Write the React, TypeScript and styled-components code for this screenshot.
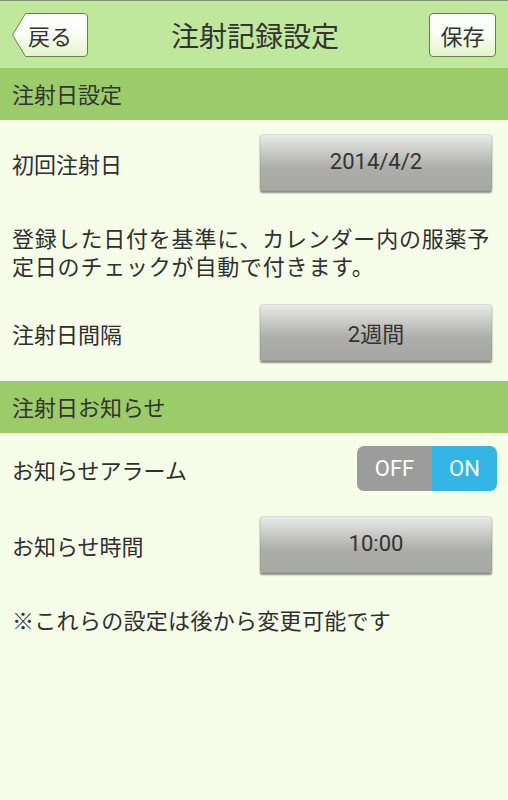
import React from "react";
import styled, { createGlobalStyle } from "styled-components";

const Global = createGlobalStyle`
  html, body { margin: 0; padding: 0; background: #f6fee9; }
  body { font-family: Roboto, "Noto Sans CJK JP", sans-serif; color: #2f2f2f; }
  * { box-sizing: border-box; }
`;

const Page = styled.div`
  width: 508px;
  min-height: 800px;
  background: #f6fee9;
  display: flex;
  flex-direction: column;
`;

const Header = styled.header`
  height: 68px;
  background: #bfe89c;
  border-top: 1px solid #7f8f70;
  display: grid;
  grid-template-columns: 1fr auto 1fr;
  align-items: center;
  padding: 0 12px;
`;

const Title = styled.h1`
  margin: 0;
  font-size: 28px;
  font-weight: 400;
  color: #333;
  font-family: "Noto Sans CJK JP", sans-serif;
  letter-spacing: 0;
  padding-left: 2px;
`;

const BackButton = styled.button`
  position: relative;
  justify-self: start;
  width: 76px;
  height: 44px;
  margin-top: 1px;
  border: none;
  background: none;
  padding: 0 0 0 16px;
  font-family: "Noto Sans CJK JP", sans-serif;
  font-size: 22px;
  color: #333;
  text-align: left;
  cursor: pointer;
  & > span { position: relative; }
`;

const BackShape = styled.svg`
  position: absolute;
  inset: 0;
`;

const SaveButton = styled.button`
  justify-self: end;
  width: 67px;
  height: 44px;
  margin-top: 1px;
  border: 1px solid #6e7d4e;
  border-radius: 4px;
  background: linear-gradient(#ffffff 0%, #fbfef6 45%, #e2f4c9 100%);
  font-family: "Noto Sans CJK JP", sans-serif;
  font-size: 22px;
  color: #333;
  padding: 0;
  cursor: pointer;
`;

const SectionHeader = styled.div<{ $mt?: number }>`
  height: 52px;
  margin-top: ${(p) => p.$mt ?? 0}px;
  background: #9bcc69;
  display: flex;
  align-items: center;
  padding: 0 12px 2px;
  font-family: "Noto Sans CJK JP", sans-serif;
  font-size: 22px;
  color: #333;
`;

const Row = styled.div<{ $mt: number }>`
  display: flex;
  align-items: center;
  justify-content: space-between;
  margin-top: ${(p) => p.$mt}px;
  padding: 0 16px 0 12px;
`;

const Label = styled.span`
  font-family: "Noto Sans CJK JP", sans-serif;
  font-size: 22px;
  color: #2f2f2f;
`;

const ValueButton = styled.button`
  width: 232px;
  height: 57px;
  border: none;
  border-radius: 2px;
  background: linear-gradient(#ebebe9 0%, #c6c7c3 35%, #acada9 60%, #a7a8a4 100%);
  box-shadow: 0 2px 2px rgba(0, 0, 0, 0.45), inset 0 0 0 1px rgba(0, 0, 0, 0.06);
  font-family: Roboto, "Noto Sans CJK JP", sans-serif;
  font-size: 22px;
  color: #333;
  padding: 0 0 2px;
  cursor: pointer;
`;

const Paragraph = styled.div<{ $mt: number; $size: number; $spacing?: number }>`
  margin: ${(p) => p.$mt}px 0 0;
  padding: 0 12px;
  display: flex;
  flex-direction: column;
  font-family: "Noto Sans CJK JP", sans-serif;
  font-size: ${(p) => p.$size}px;
  letter-spacing: ${(p) => p.$spacing ?? 0}px;
  color: #2f2f2f;
  white-space: nowrap;
`;

const Line = styled.span`
  display: block;
  height: 28px;
  line-height: 28px;
`;

const Toggle = styled.div`
  display: flex;
  width: 140px;
  height: 45px;
  border-radius: 7px;
  overflow: hidden;
  margin-right: -5px;
`;

const ToggleHalf = styled.span<{ $active?: boolean }>`
  flex: ${(p) => (p.$active ? "0 0 65px" : "0 0 75px")};
  display: flex;
  align-items: center;
  justify-content: center;
  background: ${(p) => (p.$active ? "#33b5e5" : "#9c9c9c")};
  color: #ffffff;
  font-family: Roboto, sans-serif;
  font-size: 22px;
  padding-bottom: 1px;
`;

export default function App() {
  return (
    <Page>
      <Global />
      <Header>
        <BackButton>
          <BackShape width="76" height="44" viewBox="0 0 76 44">
            <defs>
              <linearGradient id="bk" x1="0" y1="0" x2="0" y2="1">
                <stop offset="0" stopColor="#ffffff" />
                <stop offset="0.45" stopColor="#fbfef6" />
                <stop offset="1" stopColor="#e2f4c9" />
              </linearGradient>
            </defs>
            <path
              d="M13.5 0.5 H72 Q75.5 0.5 75.5 4 V40 Q75.5 43.5 72 43.5 H13.5 L1.2 23.2 Q0.5 22 1.2 20.8 Z"
              fill="url(#bk)"
              stroke="#6e7d4e"
              strokeWidth="1"
            />
          </BackShape>
          <span>戻る</span>
        </BackButton>
        <Title>注射記録設定</Title>
        <SaveButton>保存</SaveButton>
      </Header>

      <SectionHeader>注射日設定</SectionHeader>
      <Row $mt={14}>
        <Label>初回注射日</Label>
        <ValueButton>2014/4/2</ValueButton>
      </Row>
      <Paragraph $mt={32} $size={22} $spacing={0.8}>
        <Line>登録した日付を基準に、カレンダー内の服薬予</Line>
        <Line>定日のチェックが自動で付きます。</Line>
      </Paragraph>
      <Row $mt={25}>
        <Label>注射日間隔</Label>
        <ValueButton>2週間</ValueButton>
      </Row>

      <SectionHeader $mt={20}>注射日お知らせ</SectionHeader>
      <Row $mt={13}>
        <Label>お知らせアラーム</Label>
        <Toggle>
          <ToggleHalf>OFF</ToggleHalf>
          <ToggleHalf $active>ON</ToggleHalf>
        </Toggle>
      </Row>
      <Row $mt={25}>
        <Label>お知らせ時間</Label>
        <ValueButton>10:00</ValueButton>
      </Row>
      <Paragraph $mt={32} $size={22} $spacing={0.3}>
        <Line>※これらの設定は後から変更可能です</Line>
      </Paragraph>
    </Page>
  );
}
